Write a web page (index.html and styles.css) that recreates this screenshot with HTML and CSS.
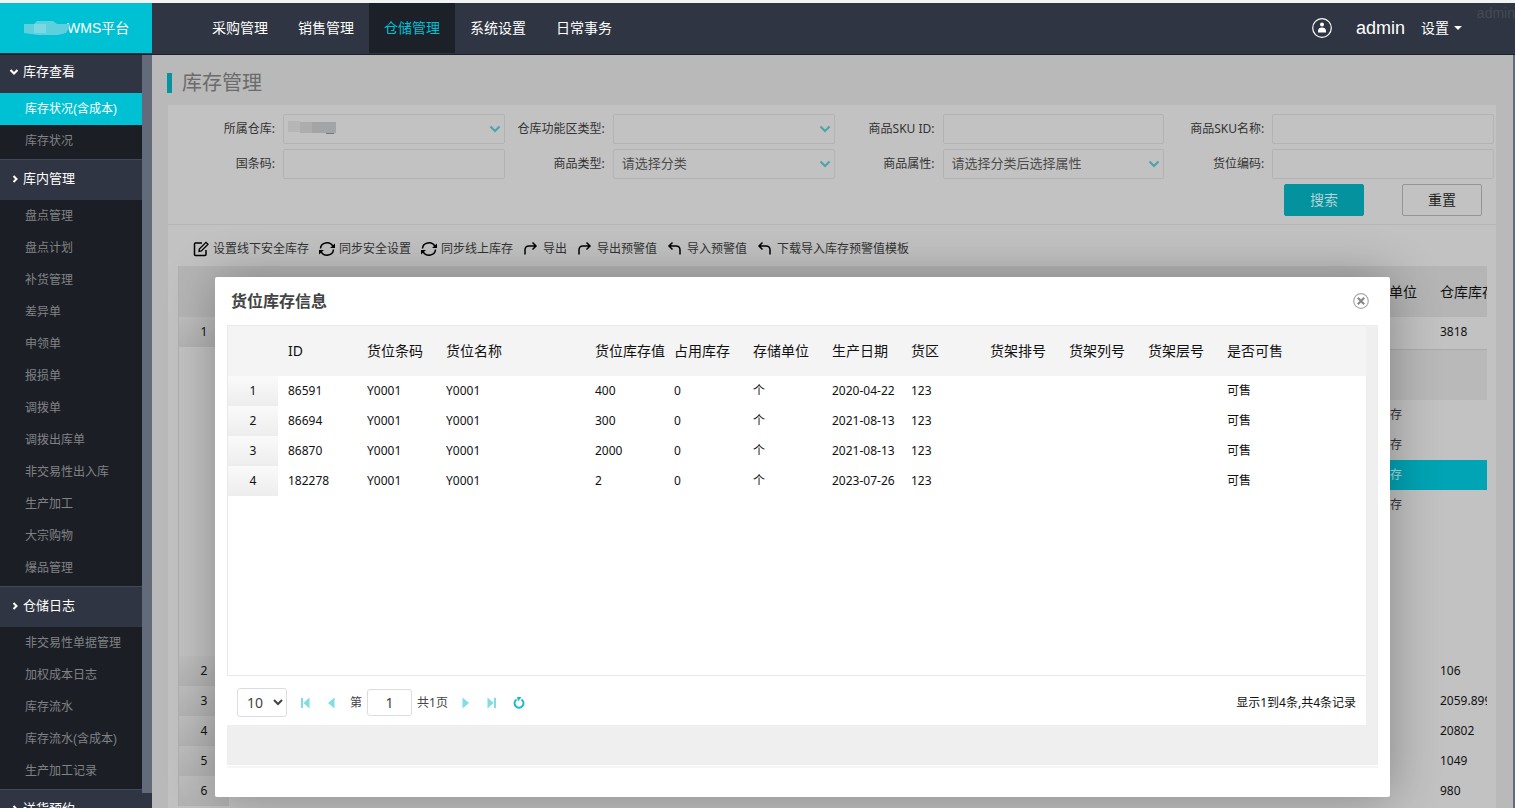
FILE: index.html
```html
<!DOCTYPE html>
<html lang="zh-CN">
<head>
<meta charset="utf-8">
<title>WMS平台 - 库存管理</title>
<link rel="stylesheet" href="styles.css">
</head>
<body>
<svg class="defs" aria-hidden="true">
  <symbol id="i-down" viewBox="0 0 12 8"><path d="M1.500 1.500 6 6l4.500-4.500" fill="none" stroke="currentColor" stroke-width="2.200"/></symbol>
  <symbol id="i-edit" viewBox="0 0 16 16"><path d="M9 2H2.500Q1.500 2 1.500 3v10.500q0 1 1 1H12q1 0 1-1V9" fill="none" stroke="currentColor" stroke-width="1.500"/><path d="M6 10.500 6.300 8 13 1.300 15 3.300 8.400 10z" fill="none" stroke="currentColor" stroke-width="1.300"/></symbol>
  <symbol id="i-sync" viewBox="0 0 16 16"><path d="M1.500 7.500a6.500 6 0 0 1 12.300-2.300M14.500 8.500A6.500 6 0 0 1 2.200 10.800" fill="none" stroke="currentColor" stroke-width="1.500"/><path d="M16 2.500V7h-5zM0 13.500V9h5z" fill="currentColor"/></symbol>
  <symbol id="i-out" viewBox="0 0 16 16"><path d="M2 13.500V9Q2 5 6 5h7M9.500 1.500 13 5 9.500 8.500" fill="none" stroke="currentColor" stroke-width="1.500"/></symbol>
  <symbol id="i-in" viewBox="0 0 16 16"><path d="M13 13.500V9Q13 5 9 5H2M5.500 1.500 2 5l3.500 3.500" fill="none" stroke="currentColor" stroke-width="1.500"/></symbol>
</svg>

<header class="topbar">
  <a class="logo" href="#"><svg class="logo-mask" viewBox="0 0 46 14" aria-hidden="true"><path d="M0 3h10l3-3h16l4 3h12v4l-3 5-8 2H14L0 12z" fill="#5cd0dc"/><path d="M10 3h12v9H10z" fill="#7bd9e3"/></svg><span>WMS平台</span></a>
  <nav class="nav">
    <a href="#">采购管理</a><a href="#">销售管理</a><a class="on" href="#">仓储管理</a><a href="#">系统设置</a><a href="#">日常事务</a>
  </nav>
  <div class="user">
    <svg class="avatar" viewBox="0 0 20 20" aria-hidden="true"><circle cx="10" cy="10" r="9.300" fill="none" stroke="#fff" stroke-width="1.200"/><circle cx="10" cy="6.500" r="2" fill="#fff"/><path d="M6 14.500V12.500Q6.500 9.500 10 9.500t4 3v2z" fill="#fff"/></svg>
    <span class="user-name">admin</span>
    <button class="settings" type="button">设置<i class="caret"></i></button>
  </div>
  <span class="watermark">admin</span>
</header>

<div class="shell">
  <aside class="side">
    <nav class="menu">
      <h2 class="first"><svg class="arrow" viewBox="0 0 10 10"><path d="M1.500 3 5 6.500 8.500 3" fill="none" stroke="currentColor" stroke-width="2.200"/></svg>库存查看</h2>
      <ul><li><a class="on" href="#">库存状况(含成本)</a></li><li><a href="#">库存状况</a></li></ul>
      <h2><svg class="arrow" viewBox="0 0 10 10"><path d="M4.500 2 7.500 5l-3 3" fill="none" stroke="currentColor" stroke-width="2"/></svg>库内管理</h2>
      <ul>
        <li><a href="#">盘点管理</a></li><li><a href="#">盘点计划</a></li><li><a href="#">补货管理</a></li><li><a href="#">差异单</a></li><li><a href="#">申领单</a></li><li><a href="#">报损单</a></li><li><a href="#">调拨单</a></li><li><a href="#">调拨出库单</a></li><li><a href="#">非交易性出入库</a></li><li><a href="#">生产加工</a></li><li><a href="#">大宗购物</a></li><li><a href="#">爆品管理</a></li>
      </ul>
      <h2><svg class="arrow" viewBox="0 0 10 10"><path d="M4.500 2 7.500 5l-3 3" fill="none" stroke="currentColor" stroke-width="2"/></svg>仓储日志</h2>
      <ul>
        <li><a href="#">非交易性单据管理</a></li><li><a href="#">加权成本日志</a></li><li><a href="#">库存流水</a></li><li><a href="#">库存流水(含成本)</a></li><li><a href="#">生产加工记录</a></li>
      </ul>
      <h2><svg class="arrow" viewBox="0 0 10 10"><path d="M4.500 2 7.500 5l-3 3" fill="none" stroke="currentColor" stroke-width="2"/></svg>送货预约</h2>
    </nav>
    <div class="scroll"></div>
  </aside>

  <main class="main">
    <h1>库存管理</h1>
    <section class="panel">
      <form class="filters">
        <div class="field"><label for="wh">所属仓库:</label><div class="box"><select id="wh"><option></option></select><svg class="down"><use href="#i-down"/></svg><svg class="blur" viewBox="0 0 48 13" aria-hidden="true"><path d="M0 0h12v11H0z" fill="#b6b6b6"/><path d="M12 1h12v11H12z" fill="#adadad"/><path d="M24 1h24v11H24z" fill="#a3a4a6"/><path d="M38 12h8v1h-8z" fill="#777"/></svg></div></div>
        <div class="field"><label for="zone">仓库功能区类型:</label><div class="box"><select id="zone"><option></option></select><svg class="down"><use href="#i-down"/></svg></div></div>
        <div class="field"><label for="skuid">商品SKU ID:</label><div class="box"><input id="skuid" type="text"></div></div>
        <div class="field"><label for="skuname">商品SKU名称:</label><div class="box"><input id="skuname" type="text"></div></div>
        <div class="field"><label for="code">国条码:</label><div class="box"><input id="code" type="text"></div></div>
        <div class="field"><label for="type">商品类型:</label><div class="box"><select id="type"><option>请选择分类</option></select><svg class="down"><use href="#i-down"/></svg></div></div>
        <div class="field"><label for="attr">商品属性:</label><div class="box"><select id="attr"><option>请选择分类后选择属性</option></select><svg class="down"><use href="#i-down"/></svg></div></div>
        <div class="field"><label for="loc">货位编码:</label><div class="box"><input id="loc" type="text"></div></div>
        <div class="actions"><button class="btn primary" type="button">搜索</button><button class="btn" type="button">重置</button></div>
      </form>
      <div class="tools">
        <button type="button"><svg><use href="#i-edit"/></svg>设置线下安全库存</button>
        <button type="button"><svg><use href="#i-sync"/></svg>同步安全设置</button>
        <button type="button"><svg><use href="#i-sync"/></svg>同步线上库存</button>
        <button type="button"><svg><use href="#i-out"/></svg>导出</button>
        <button type="button"><svg><use href="#i-out"/></svg>导出预警值</button>
        <button type="button"><svg><use href="#i-in"/></svg>导入预警值</button>
        <button type="button"><svg><use href="#i-in"/></svg>下载导入库存预警值模板</button>
      </div>
      <div class="stock">
        <table class="grid">
          <colgroup><col class="c-num"><col><col class="c-unit"><col class="c-qty"></colgroup>
          <thead><tr><th></th><th></th><th>单位</th><th>仓库库存</th></tr></thead>
          <tbody>
            <tr><td class="num">1</td><td></td><td></td><td>3818</td></tr>
            <tr class="detail"><td></td><td colspan="3">
              <table class="sub">
                <thead><tr><th></th></tr></thead>
                <tbody><tr><td>库存</td></tr><tr><td>库存</td></tr><tr class="on"><td>库存</td></tr><tr><td>库存</td></tr></tbody>
              </table>
            </td></tr>
            <tr><td class="num">2</td><td></td><td></td><td>106</td></tr>
            <tr><td class="num">3</td><td></td><td></td><td>2059.899</td></tr>
            <tr><td class="num">4</td><td></td><td></td><td>20802</td></tr>
            <tr><td class="num">5</td><td></td><td></td><td>1049</td></tr>
            <tr><td class="num">6</td><td></td><td></td><td>980</td></tr>
          </tbody>
        </table>
      </div>
    </section>
  </main>
</div>

<div class="dialog" role="dialog" aria-labelledby="dlg-title">
  <div class="dlg-head">
    <h2 id="dlg-title">货位库存信息</h2>
    <button class="close" type="button" aria-label="关闭"><svg viewBox="0 0 16 16"><circle cx="8" cy="8" r="7.300" fill="none" stroke="#aaa" stroke-width="1.200"/><path d="m4.800 4.800 6.400 6.400m0-6.400-6.400 6.400" stroke="#888" stroke-width="2.200"/></svg></button>
  </div>
  <div class="dlg-body">
    <div class="sheet">
      <div class="rows">
        <table class="grid">
          <colgroup><col class="c-num"><col class="c"><col class="c"><col class="c-name"><col class="c"><col class="c"><col class="c"><col class="c"><col class="c"><col class="c"><col class="c"><col class="c"><col></colgroup>
          <thead><tr><th></th><th>ID</th><th>货位条码</th><th>货位名称</th><th>货位库存值</th><th>占用库存</th><th>存储单位</th><th>生产日期</th><th>货区</th><th>货架排号</th><th>货架列号</th><th>货架层号</th><th>是否可售</th></tr></thead>
          <tbody>
            <tr><td class="num">1</td><td>86591</td><td>Y0001</td><td>Y0001</td><td>400</td><td>0</td><td>个</td><td>2020-04-22</td><td>123</td><td></td><td></td><td></td><td>可售</td></tr>
            <tr><td class="num">2</td><td>86694</td><td>Y0001</td><td>Y0001</td><td>300</td><td>0</td><td>个</td><td>2021-08-13</td><td>123</td><td></td><td></td><td></td><td>可售</td></tr>
            <tr><td class="num">3</td><td>86870</td><td>Y0001</td><td>Y0001</td><td>2000</td><td>0</td><td>个</td><td>2021-08-13</td><td>123</td><td></td><td></td><td></td><td>可售</td></tr>
            <tr><td class="num">4</td><td>182278</td><td>Y0001</td><td>Y0001</td><td>2</td><td>0</td><td>个</td><td>2023-07-26</td><td>123</td><td></td><td></td><td></td><td>可售</td></tr>
          </tbody>
        </table>
      </div>
      <div class="pager">
        <select class="size" aria-label="每页条数"><option>10</option></select>
        <button type="button" aria-label="首页"><svg viewBox="0 0 10 12"><path d="M1 1h2v10H1zM9.500 .5v11L3.500 6z" fill="#80dce5"/></svg></button>
        <button type="button" aria-label="上一页"><svg viewBox="0 0 10 12"><path d="M8.500 .5v11L2 6z" fill="#80dce5"/></svg></button>
        <label class="page">第<input type="text" value="1"><span>共1页</span></label>
        <button type="button" aria-label="下一页"><svg viewBox="0 0 10 12"><path d="M1.500 .5v11L8 6z" fill="#80dce5"/></svg></button>
        <button type="button" aria-label="末页"><svg viewBox="0 0 10 12"><path d="M7 1h2v10H7zM.5 .5v11l6-5.500z" fill="#80dce5"/></svg></button>
        <button type="button" aria-label="刷新"><svg viewBox="0 0 12 12"><path d="M8.500 2.500A4.500 4.500 0 1 1 3.500 2.500" fill="none" stroke="#12b9ca" stroke-width="1.900"/><path d="M4 0h4.500L5 4.500z" fill="#12b9ca"/></svg></button>
        <span class="total">显示1到4条,共4条记录</span>
      </div>
    </div>
  </div>
</div>
</body>
</html>
```
FILE: styles.css
```css
* { box-sizing: border-box; }
html, body { height: 100%; }
body {
  margin: 0;
  display: flex;
  flex-direction: column;
  overflow: hidden;
  border-top: 3px solid #f2f3f3;
  background: #b9b9b9;
  color: #111;
  font: 12px/20px "Noto Sans", "Noto Sans CJK SC", sans-serif;
}
a { color: inherit; text-decoration: none; }
button, input, select { font: inherit; color: inherit; }
button { padding: 0; border: 0; background: none; }
h1, h2, ul { margin: 0; padding: 0; list-style: none; font-weight: 400; }
.defs { position: absolute; width: 0; height: 0; }

/* Top bar */
.topbar {
  position: relative;
  flex: none;
  display: flex;
  height: 52px;
  border-bottom: 1px solid #1b2029;
  background: #2f3542;
  color: #fff;
  font: 14px/50px "Liberation Sans", "Noto Sans CJK SC", sans-serif;
}
.logo {
  display: flex;
  align-items: center;
  width: 152px;
  height: 50px;
  padding-left: 24px;
  background: #00c1d4;
}
.logo-mask { flex: none; z-index: 1; width: 46px; height: 14px; margin-right: -3px; }
.nav { display: flex; margin-left: 45px; }
.nav a { height: 50px; padding: 0 15px; }
.nav .on { background: #1b2029; color: #00c1d4; }
.user { display: flex; align-items: center; height: 50px; margin-left: auto; padding-right: 53px; }
.avatar { width: 20px; height: 20px; margin-right: 24px; }
.user-name { font-size: 18px; }
.settings { display: flex; align-items: center; gap: 5px; margin-left: 16px; line-height: 50px; }
.caret { border: 4px solid transparent; border-top-color: #fff; border-bottom: 0; }
.watermark { position: absolute; top: 2px; right: 0; color: #444954; line-height: 16px; }

/* Sidebar */
.shell { flex: 1; display: flex; min-height: 0; }
.side { flex: none; display: flex; width: 152px; background: #2f3542; overflow: hidden; }
.menu {
  width: 142px;
  font-family: "Liberation Sans", "Noto Sans CJK SC", sans-serif;
}
.menu h2 {
  display: flex;
  align-items: center;
  gap: 4px;
  height: 41px;
  padding: 0 0 2px 9px;
  border-top: 1px solid #414856;
  background: #2f3542;
  color: #fff;
  font-size: 13px;
}
.menu .first { height: 38px; padding-bottom: 4px; border-top: 0; }
.arrow { width: 10px; height: 10px; }
.menu ul { padding-bottom: 2px; background: #1b1e25; }
.menu a { display: block; padding-left: 25px; color: #808285; line-height: 32px; }
.menu .on { background: #00c1d4; color: #fff; }
.scroll { width: 10px; margin-bottom: 15px; background: #636a79; }

/* Main area */
.main { flex: 1; min-width: 0; padding: 18px 16px 0 15px; border-right: 2px solid #636a79; }
.main h1 {
  margin-bottom: 11px;
  padding-left: 10px;
  border-left: 5px solid #03949f;
  color: #6b6b6b;
  font-size: 20px;
  line-height: 20px;
}
.panel { min-height: 100%; border: 1px solid #b9b9b9; background: #c2c2c2; }
.filters {
  display: grid;
  grid-template-columns: repeat(4, 1fr);
  gap: 5px 0;
  padding: 9px 2px 8px 7px;
  border-bottom: 1px solid #b5b5b5;
}
.field { display: flex; align-items: center; gap: 8px; color: #333; }
.field label { width: 100px; text-align: right; white-space: nowrap; }
.box { position: relative; flex: 1; min-width: 0; }
.box input, .box select {
  display: block;
  appearance: none;
  width: 100%;
  height: 30px;
  padding: 0 8px 2px;
  border: 1px solid #b3b3b3;
  border-radius: 2px;
  background: #c2c2c2;
  color: #4c4c4c;
  font-size: 13px;
}
.down { position: absolute; top: 11px; right: 4px; width: 12px; height: 8px; color: #4fa3ab; }
.blur { position: absolute; top: 7px; left: 5px; width: 48px; height: 13px; }
.actions { grid-column: 1 / -1; display: flex; justify-content: flex-end; gap: 38px; padding-right: 12px; }
.btn {
  width: 80px;
  height: 32px;
  border: 1px solid #959595;
  border-radius: 2px;
  color: #222;
  font-size: 14px;
}
.primary { border-color: #03929e; background: #03929e; color: #b4d3d6; }
.tools { display: flex; gap: 10px; padding: 14px 25px 7px; color: #333; }
.tools button { display: flex; align-items: center; gap: 4px; }
.tools svg { width: 16px; height: 16px; color: #000; }

/* Tables */
.grid { width: 100%; table-layout: fixed; border-collapse: collapse; }
.grid th, .grid td {
  height: 30px;
  padding: 0 0 0 10px;
  text-align: left;
  font-weight: 400;
  white-space: nowrap;
}
.grid th { height: 51px; font-size: 14px; }
.grid .num { padding: 0; text-align: center; }
.c-num { width: 50px; }
.c { width: 79px; }
.c-name { width: 149px; }
.c-unit { width: 51px; }
.c-qty { width: 57px; }
.stock { margin: 0 9px 0 10px; border-left: 1px solid #b0b0b0; overflow: hidden; }
.stock thead { background: #b5b5b5; }
.stock .num { background: linear-gradient(#bebebe, #b3b3b3); }
.detail > td { vertical-align: top; }
.detail > td:last-child { padding: 2px 0 136px; }
.sub { width: 100%; border-collapse: collapse; color: #333; }
.grid .sub th { height: 50px; border-top: 1px solid #aaa; background: #b9b9b9; }
.grid .sub td { padding-right: 85px; text-align: right; }
.sub .on { background: #00a4b4; color: #b4dde1; }

/* Dialog */
.dialog {
  position: absolute;
  top: 277px;
  left: 215px;
  right: 125px;
  padding: 0 12px 31px;
  border-radius: 2px;
  background: #fff;
  box-shadow: 1px 1px 50px rgba(0, 0, 0, .3);
}
.dlg-head { display: flex; align-items: center; justify-content: space-between; height: 48px; padding: 0 9px 0 4px; }
.dlg-head h2 { color: #444; font-size: 16px; font-weight: 700; }
.close, .close svg { display: block; width: 16px; height: 16px; }
.dlg-body { padding: 0 12px 40px 0; border-bottom: 1px solid #fff; background: #efefef; box-shadow: 0 2px 0 #f6f6f6; }
.sheet { background: #fff; }
.rows { min-height: 351px; border: solid #e9e9e9; border-width: 1px 0 1px 1px; }
.rows thead { background: #f4f4f4; }
.rows .grid th { height: 50px; }
.rows .num { background: linear-gradient(#fafafa, #ededed); }
.pager { display: flex; align-items: center; height: 49px; padding: 4px 10px 0; color: #444; }
.size {
  width: 50px;
  height: 29px;
  margin-right: 13px;
  padding: 0 0 0 5px;
  border: 1px solid #ddd;
  border-radius: 3px;
  background: #fff;
  font-size: 14px;
}
.pager button { margin-right: 16px; }
.pager svg { display: block; width: 10px; height: 12px; }
.pager button:last-of-type svg { width: 12px; }
.page { display: flex; align-items: center; gap: 5px; margin: 0 13px 0 -2px; }
.page input {
  width: 45px;
  height: 27px;
  padding: 0;
  border: 1px solid #ddd;
  border-radius: 3px;
  text-align: center;
  font-size: 14px;
}
.total { margin-left: auto; color: #111; }
```
